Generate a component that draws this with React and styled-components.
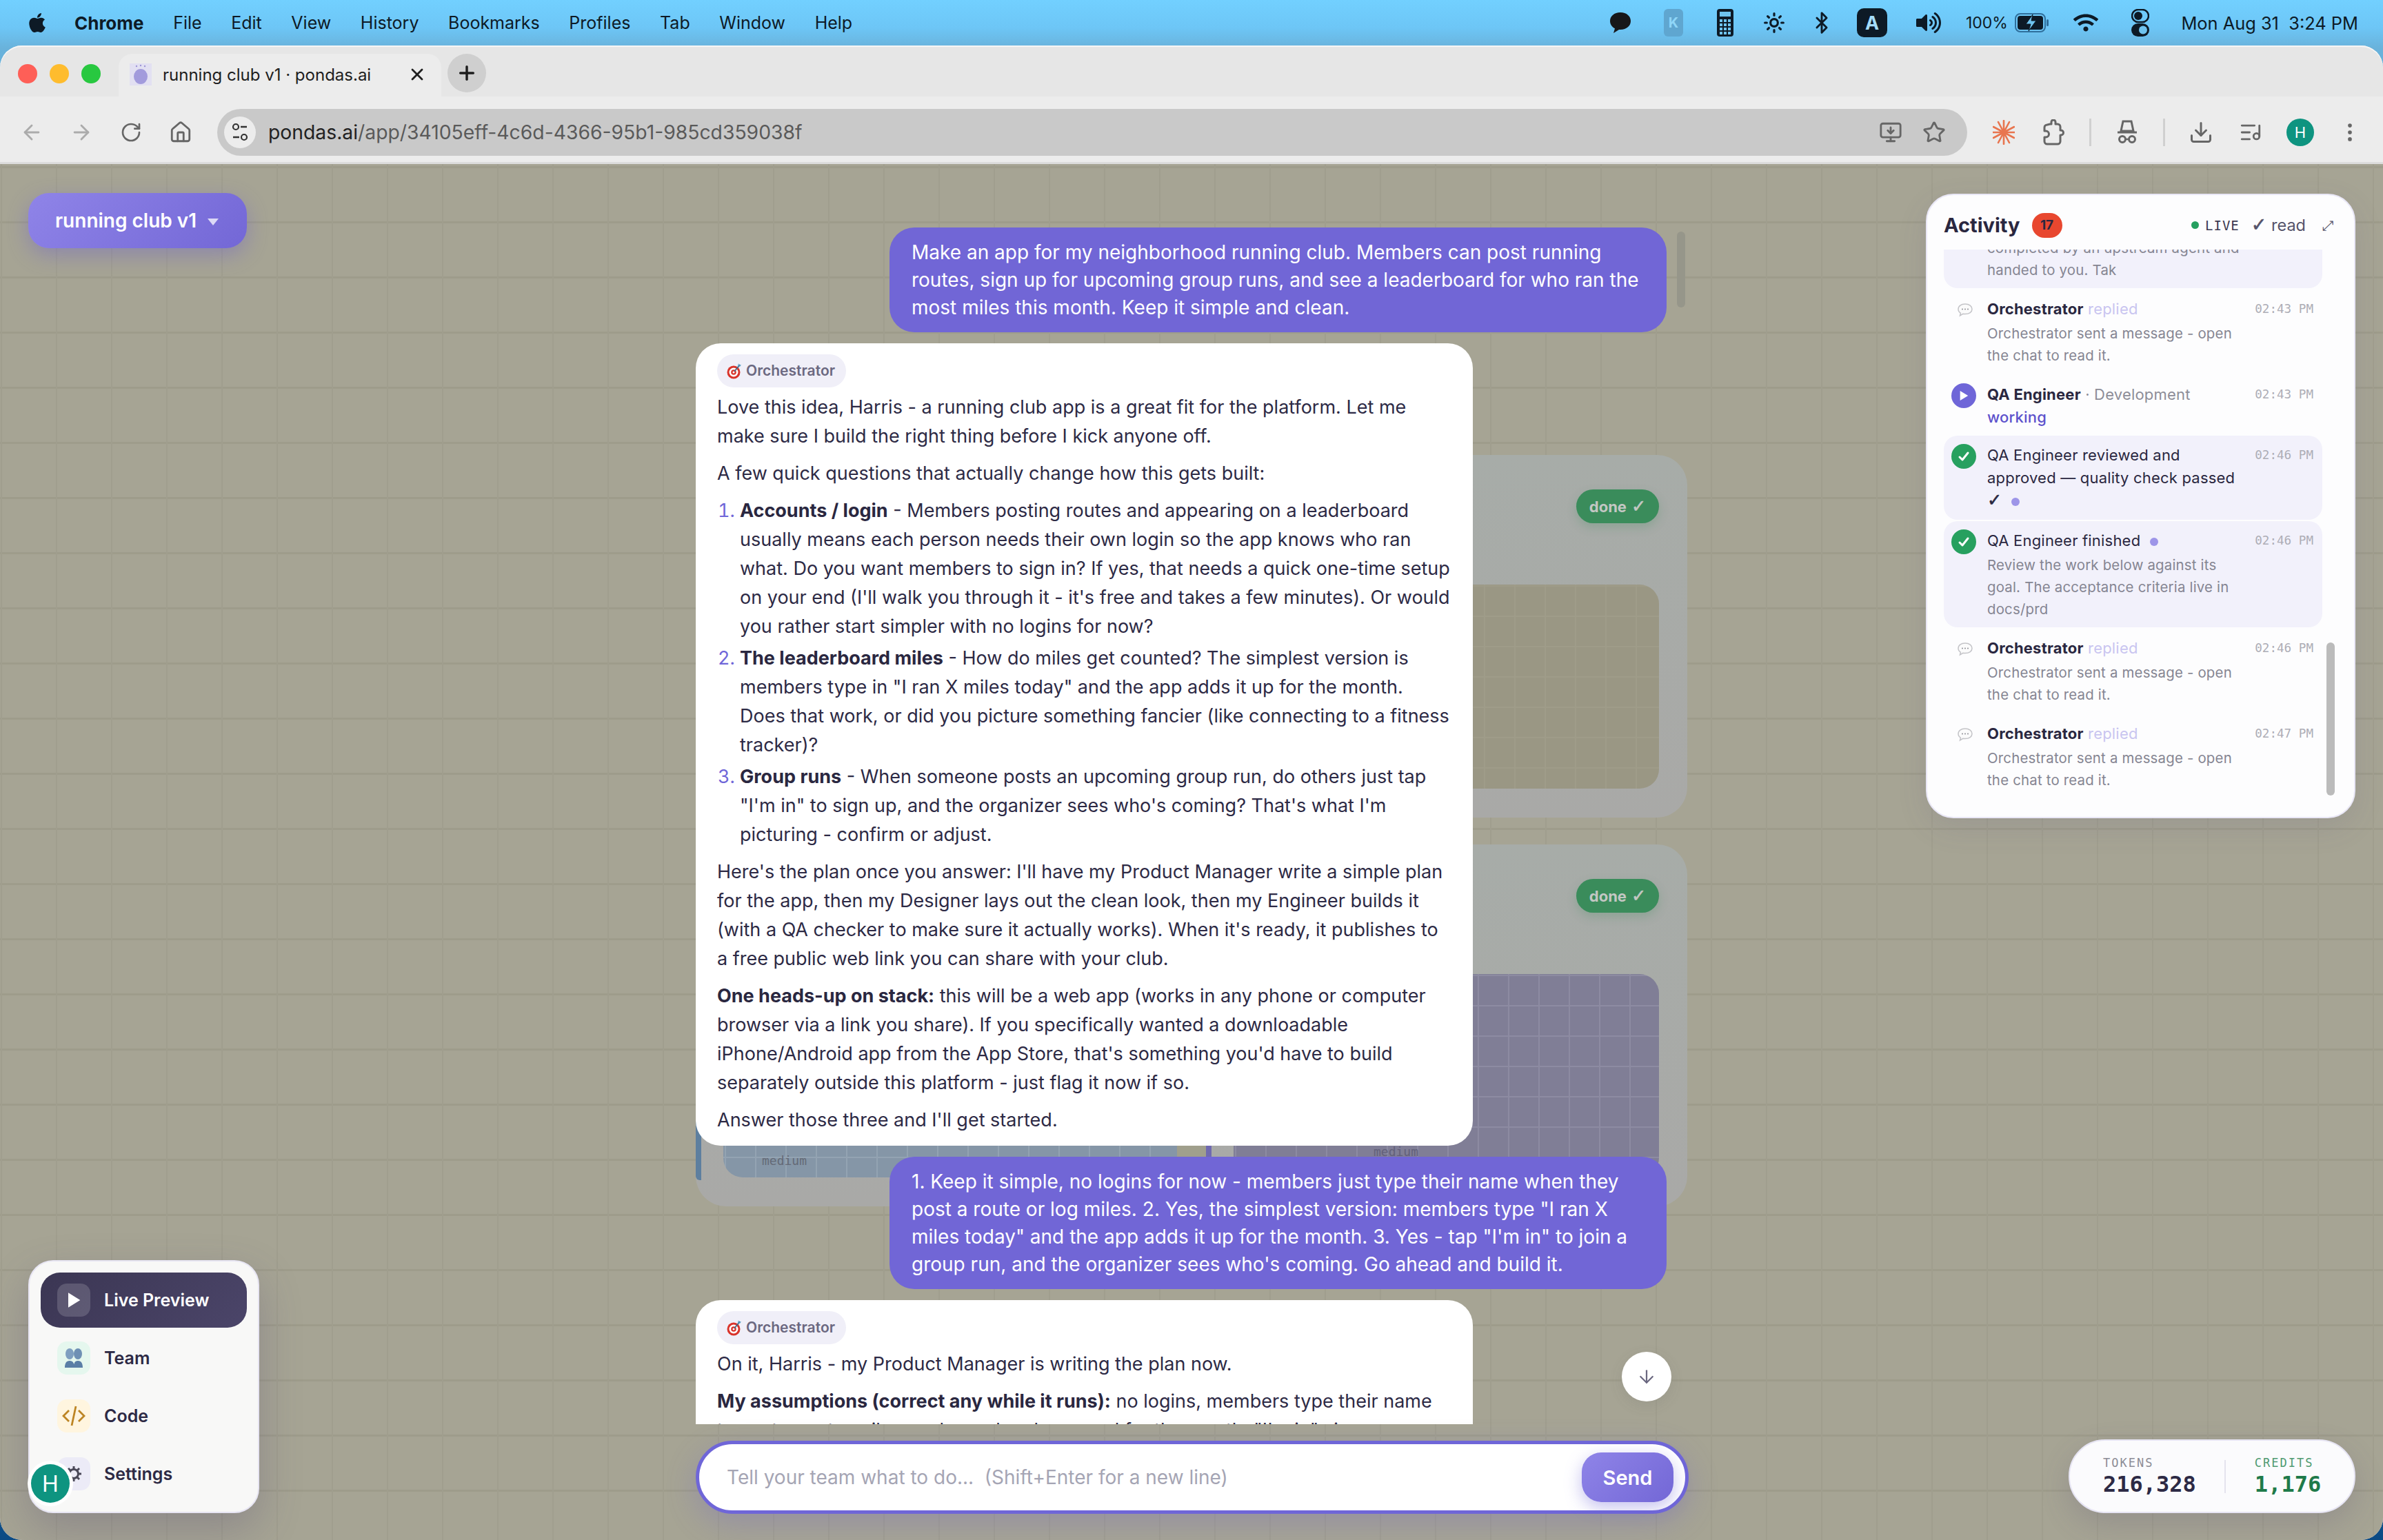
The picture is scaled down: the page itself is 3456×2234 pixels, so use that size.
import React from 'react';
import styled, { createGlobalStyle } from 'styled-components';
import { FaApple, FaWifi, FaVolumeUp } from 'react-icons/fa';
import { ArrowLeft, ArrowRight, RotateCw, Home, Star, Download, MoreVertical, ArrowDown, Sun, Bluetooth, ListMusic, MonitorDown, X, Plus } from 'lucide-react';

const GlobalStyle = createGlobalStyle`
    html, body { margin: 0; padding: 0; }
    body { font-family: Inter, "Noto Sans", sans-serif; }
    * { box-sizing: border-box; }
`;

const mono = `"DejaVu Sans Mono", "Liberation Mono", monospace`;

const Screen = styled.div`
    width: 3456px;
    height: 2234px;
    display: flex;
    flex-direction: column;
    overflow: hidden;
    background: linear-gradient(180deg, #72d0ff 0, #6dc6f6 40px, #69b2db 70px, #2c7cbc 1900px, #0b4a84 100%);
`;

// macOS menu bar
const MenuBar = styled.div`
    height: 66px;
    flex: none;
    display: flex;
    align-items: center;
    padding: 0 36px 0 38px;
    color: #0d1a26;
    font-size: 25px;
`;

const MenuItems = styled.div`
    display: flex;
    align-items: center;
    gap: 42.600px;
    margin-left: 38px;
    flex: 1;
`;

const MenuItem = styled.span`
    font-weight: ${p => (p.$bold ? 700 : 400)};
    font-size: ${p => (p.$bold ? 26 : 25)}px;
`;

const StatusSlot = styled.div`
    width: ${p => p.$w}px;
    display: flex;
    align-items: center;
    justify-content: center;
    gap: 10px;
`;

const StatusText = styled.span`
    font-size: 23px;
    white-space: nowrap;
`;

const Clock = styled.span`
    margin-left: 24px;
    font-size: 25.400px;
    white-space: nowrap;
`;

// browser window
const Browser = styled.div`
    flex: 1;
    display: flex;
    flex-direction: column;
    border-radius: 32px;
    overflow: hidden;
    background: #e6e6e6;
    box-shadow: inset 0 2px 0 #f6f6f6;
`;

const TabStrip = styled.div`
    height: 74px;
    flex: none;
    display: flex;
    align-items: flex-end;
    padding-left: 26px;
`;

const Lights = styled.div`
    display: flex;
    gap: 18px;
    align-self: center;
    margin-top: 8px;
`;

const Light = styled.span`
    width: 28px;
    height: 28px;
    border-radius: 50%;
    background: ${p => p.$c};
`;

const Tab = styled.div`
    width: 468px;
    height: 62px;
    margin-left: 26px;
    padding: 0 21px 2px 16px;
    display: flex;
    align-items: center;
    background: #ececec;
    border-radius: 20px 20px 0 0;
    font-size: 24px;
    color: #1e1e1e;
`;

const Favicon = styled.span`
    width: 32px;
    height: 32px;
    display: flex;
    align-items: center;
    justify-content: center;
    background: #e2e0f2;
    margin-right: 16px;
`;

const TabTitle = styled.span`
    flex: 1;
    white-space: nowrap;
`;

const NewTab = styled.div`
    width: 56px;
    height: 56px;
    margin: 0 0 6px 9px;
    border-radius: 50%;
    background: #cfcfcf;
    display: flex;
    align-items: center;
    justify-content: center;
    color: #1e1e1e;
`;

const Toolbar = styled.div`
    height: 98px;
    flex: none;
    display: flex;
    align-items: center;
    padding: 9px 0 0 10px;
    background: #ececec;
    border-bottom: 3px solid #dcdcdc;
`;

const ToolSlot = styled.div`
    width: ${p => p.$w || 72}px;
    flex: none;
    display: flex;
    align-items: center;
    justify-content: center;
    color: ${p => p.$c || '#666'};
`;

const UrlBar = styled.div`
    width: 2538px;
    height: 68px;
    margin: 0 17px;
    padding: 0 17px 0 10px;
    flex: none;
    display: flex;
    align-items: center;
    border-radius: 34px;
    background: #c9c9c9;
`;

const SiteIcon = styled.span`
    width: 46px;
    height: 46px;
    border-radius: 50%;
    background: #ececec;
    display: flex;
    align-items: center;
    justify-content: center;
    margin-right: 18px;
`;

const UrlText = styled.span`
    flex: 1;
    font-size: 28.300px;
    color: #5a5a5a;
    white-space: nowrap;
`;

const UrlHost = styled.span`
    color: #222;
`;

const ToolDivider = styled.span`
    width: 3px;
    height: 40px;
    margin: 0 16px;
    flex: none;
    background: #d0d0d0;
`;

const Avatar = styled.span`
    width: 40px;
    height: 40px;
    border-radius: 50%;
    background: #0e9480;
    color: #fff;
    font-size: 22px;
    display: flex;
    align-items: center;
    justify-content: center;
`;

// app canvas, panels float above it
const Canvas = styled.div`
    position: relative;
    flex: 1;
    overflow: hidden;
    background-color: #a6a494;
    background-image:
        linear-gradient(90deg, #a09e8e 2px, transparent 2px),
        linear-gradient(180deg, #9e9c8b 3px, transparent 3px);
    background-size: 80px 80px;
    background-position: 1px 3px;
`;

const ProjectPill = styled.div`
    position: absolute;
    left: 41px;
    top: 42px;
    width: 317px;
    height: 80px;
    border-radius: 30px;
    display: flex;
    align-items: center;
    gap: 16px;
    padding-left: 39px;
    color: #fff;
    font-size: 28px;
    font-weight: 600;
    white-space: nowrap;
    background: linear-gradient(135deg, #8f84e8, #7367d6);
    box-shadow: 0 10px 30px rgba(110, 100, 200, 0.45);
`;

const Caret = styled.span`
    width: 0;
    height: 0;
    margin-top: 4px;
    border-left: 8px solid transparent;
    border-right: 8px solid transparent;
    border-top: 10px solid #dcd9f6;
`;

// dimmed work cards behind the chat
const Feed = styled.div`
    position: absolute;
    left: 1009px;
    top: 422px;
    width: 1438px;
    display: flex;
    flex-direction: column;
    gap: 39px;
`;

const WorkCard = styled.div`
    height: ${p => p.$h}px;
    padding: 50px 41px 42px;
    border-radius: 44px;
    display: flex;
    flex-direction: column;
    background: linear-gradient(180deg, #a7aca8, #a9a9a7);
`;

const CardHead = styled.div`
    height: 138px;
    flex: none;
    display: flex;
    justify-content: flex-end;
    align-items: flex-start;
`;

const DoneBadge = styled.span`
    width: 120px;
    height: 49px;
    border-radius: 25px;
    display: flex;
    align-items: center;
    justify-content: center;
    gap: 7px;
    background: #3a8c5b;
    color: #c3c7c3;
    font-size: 22px;
    font-weight: 700;
    box-shadow: 0 6px 14px rgba(58, 140, 91, 0.25);
`;

const CheckGlyph = styled.span`
    font-family: "DejaVu Sans", sans-serif;
    font-size: 1.150em;
    line-height: 1;
    -webkit-text-stroke: 0.600px currentColor;
`;

const Preview = styled.div`
    position: relative;
    flex: 1;
    border-radius: 28px;
    background-color: ${p => p.$bg};
    background-image:
        linear-gradient(90deg, ${p => p.$line} 2px, transparent 2px),
        linear-gradient(180deg, ${p => p.$line} 2px, transparent 2px);
    background-size: 44px 44px;
    background-position: 2px 1px;
`;

const TileRow = styled.div`
    flex: 1;
    margin: 0 0 -4px -41px;
    display: grid;
    grid-template-columns: 698px 42px 1fr;
`;

const Tile = styled.div`
    display: flex;
    border-left: 8px solid ${p => p.$c};
    padding: 0 0 4px 32px;
    border-radius: 0 0 0 6px;
`;

const TileGap = styled.div`
    background: #a09f8c;
`;

const TileLabel = styled.span`
    position: absolute;
    left: ${p => p.$x}px;
    bottom: ${p => p.$y}px;
    font-family: ${mono};
    font-size: 18px;
    color: ${p => p.$c};
`;

const TileName = styled(TileLabel)`
    font-family: Inter, sans-serif;
    font-size: 27px;
    font-weight: 700;
    color: #2b2a42;
`;

// chat column
const Chat = styled.div`
    position: absolute;
    left: 1009px;
    top: 0;
    width: 1440px;
    height: 1828px;
    padding-top: 92px;
    overflow: hidden;
    display: flex;
    flex-direction: column;
    gap: 16px;
`;

const ChatScrollbar = styled.span`
    position: absolute;
    right: 5px;
    top: 98px;
    width: 12px;
    height: 110px;
    border-radius: 6px;
    background: #96968a;
`;

const UserBubble = styled.div`
    flex: none;
    width: 1127px;
    align-self: flex-end;
    margin-right: 32px;
    padding: 16px 32px;
    border-radius: 36px;
    background: #7166d6;
    color: #fff;
    font-size: 28px;
    line-height: 40px;
`;

const AgentBubble = styled.div`
    flex: none;
    width: 1127px;
    padding: 16px 31px;
    border-radius: 36px;
    background: #fff;
    color: #2d2a45;
    font-size: 27px;
    line-height: 42px;
`;

const AgentTag = styled.div`
    display: inline-flex;
    align-items: center;
    gap: 6px;
    height: 48px;
    padding: 0 16px 0 14px;
    margin-bottom: 8px;
    border-radius: 24px;
    background: #f0eff8;
    color: #6b6880;
    font-size: 21px;
    font-weight: 600;
    vertical-align: top;
`;

const Para = styled.p`
    margin: 0 0 12px;
    &:last-child { margin-bottom: 0; }
`;

const Steps = styled.ol`
    margin: 0 0 12px;
    padding: 0 0 0 33px;
    li { margin-bottom: 4px; }
    li:last-child { margin-bottom: 0; }
    li::marker { color: #6f66d8; }
`;

const Strong = styled.strong`
    font-weight: 700;
    color: #2a2740;
`;

const ScrollDown = styled.div`
    position: absolute;
    left: 2352px;
    top: 1723px;
    width: 72px;
    height: 72px;
    border-radius: 50%;
    background: #fff;
    display: flex;
    align-items: center;
    justify-content: center;
    color: #6b6880;
    box-shadow: 0 6px 20px rgba(80, 80, 80, 0.12);
`;

const Composer = styled.div`
    position: absolute;
    left: 1009px;
    top: 1852px;
    width: 1440px;
    height: 106px;
    padding: 0 17px 0 40px;
    display: flex;
    align-items: center;
    border-radius: 53px;
    border: 5px solid #6f66d8;
    background: #fff;
    box-shadow: 0 14px 44px rgba(110, 100, 200, 0.3);
`;

const Placeholder = styled.span`
    flex: 1;
    font-size: 28px;
    color: #a5a5b4;
    white-space: pre;
`;

const SendButton = styled.div`
    width: 133px;
    height: 72px;
    border-radius: 28px;
    display: flex;
    align-items: center;
    justify-content: center;
    color: #fff;
    font-size: 29px;
    font-weight: 600;
    background: linear-gradient(135deg, #8f84e8, #7367d6);
    box-shadow: 0 8px 24px rgba(110, 100, 214, 0.4);
`;

// activity panel
const ActivityPanel = styled.div`
    position: absolute;
    left: 2793px;
    top: 43px;
    width: 623px;
    height: 906px;
    padding: 0 24px;
    display: flex;
    flex-direction: column;
    border-radius: 40px;
    background: #fdfdfe;
    border: 2px solid #e9e7f6;
    box-shadow: 0 14px 44px rgba(80, 70, 120, 0.12);
`;

const ActivityHead = styled.div`
    height: 79px;
    flex: none;
    display: flex;
    align-items: center;
    padding-top: 8px;
`;

const ActivityTitle = styled.span`
    font-size: 29px;
    font-weight: 700;
    color: #2a2740;
`;

const CountBadge = styled.span`
    width: 44px;
    height: 36px;
    margin-left: 17px;
    border-radius: 18px;
    background: #e8472f;
    color: #2a2740;
    font-size: 19px;
    font-weight: 700;
    display: flex;
    align-items: center;
    justify-content: center;
`;

const LiveDot = styled.span`
    width: 11px;
    height: 11px;
    margin-left: auto;
    border-radius: 50%;
    background: #25a060;
`;

const LiveText = styled.span`
    margin-left: 9px;
    font-family: ${mono};
    font-size: 19px;
    letter-spacing: 1px;
    color: #3a3850;
`;

const ReadText = styled.span`
    margin-left: 17px;
    font-size: 23.500px;
    color: #55536a;
`;

const ExpandIcon = styled.span`
    margin-left: 24px;
    margin-right: 6px;
    display: flex;
    font-size: 20px;
    color: #55536a;
`;

const ActivityList = styled.div`
    flex: 1;
    min-height: 0;
    overflow: hidden;
    position: relative;
    margin-right: -20px;
`;

const ActivityItems = styled.div`
    width: 549px;
    margin-top: -33px;
    display: flex;
    flex-direction: column;
    gap: 2px;
`;

const ActivityScrollbar = styled.span`
    position: absolute;
    right: 24px;
    top: 570px;
    width: 12px;
    height: 222px;
    border-radius: 6px;
    background: #bbb;
`;

const Item = styled.div`
    display: grid;
    grid-template-columns: 63px 370px 1fr;
    padding: 12px 0 ${p => (p.$tight ? 8 : 11)}px;
    border-radius: 20px;
    background: ${p => (p.$unread ? '#f2f1fb' : 'transparent')};
`;

const ItemIcon = styled.div`
    padding: ${p => (p.$plain ? '7px' : '0')} 0 0 ${p => (p.$plain ? '19px' : '11px')};
`;

const StateDot = styled.span`
    width: 36px;
    height: 36px;
    border-radius: 50%;
    background: ${p => p.$c};
    display: flex;
    align-items: center;
    justify-content: center;
    color: #fff;
`;

const ItemTitle = styled.div`
    font-size: 22px;
    line-height: 33px;
    color: #2a2740;
    letter-spacing: 0.200px;
`;

const ItemName = styled.span`
    font-weight: 700;
`;

const ItemVerb = styled.span`
    color: ${p => p.$c};
    font-weight: ${p => p.$w || 400};
`;

const UnreadDot = styled.span`
    display: inline-block;
    width: 12px;
    height: 12px;
    margin-left: 14px;
    border-radius: 50%;
    background: #9d95e8;
`;

const ItemBody = styled.div`
    margin-top: 3px;
    font-size: 20.400px;
    line-height: 31.600px;
    color: #858592;
    letter-spacing: 0.200px;
`;

const ItemTime = styled.span`
    justify-self: end;
    padding-right: 13px;
    font-family: ${mono};
    font-size: 17.600px;
    line-height: 33px;
    color: #adadb6;
    white-space: nowrap;
`;

// left dock
const Dock = styled.div`
    position: absolute;
    left: 41px;
    top: 1590px;
    width: 335px;
    height: 367px;
    padding: 16px 16px 0;
    display: flex;
    flex-direction: column;
    gap: 4px;
    border-radius: 36px;
    background: #f8f8f7;
    border: 2px solid #e7e5f3;
    box-shadow: 0 24px 60px rgba(80, 70, 110, 0.28);
`;

const DockRow = styled.div`
    height: 80px;
    flex: none;
    padding-left: 24px;
    display: flex;
    align-items: center;
    gap: 20px;
    border-radius: 28px;
    font-size: 25px;
    font-weight: 600;
    color: ${p => (p.$active ? '#fff' : '#2d2a45')};
    background: ${p => (p.$active ? 'linear-gradient(135deg, #3b3653, #4b4569)' : 'transparent')};
`;

const DockTile = styled.span`
    width: 48px;
    height: 48px;
    border-radius: 14px;
    display: flex;
    align-items: center;
    justify-content: center;
    background: ${p => p.$bg};
`;

const UserAvatar = styled.span`
    position: absolute;
    left: 2px;
    top: 294px;
    width: 56px;
    height: 56px;
    border-radius: 50%;
    background: #0e9480;
    color: #fff;
    font-size: 32px;
    display: flex;
    align-items: center;
    justify-content: center;
    box-shadow: 0 0 0 5px #fff;
`;

// tokens / credits
const Meter = styled.div`
    position: absolute;
    left: 3000px;
    top: 1850px;
    width: 416px;
    height: 107px;
    padding: 0 0 0 48px;
    display: flex;
    align-items: center;
    border-radius: 53px;
    background: #fbfbfd;
    border: 2px solid #e6e4f3;
    box-shadow: 0 16px 44px rgba(80, 70, 110, 0.2);
`;

const MeterCell = styled.div`
    display: flex;
    flex-direction: column;
    gap: 3px;
    font-family: ${mono};
`;

const MeterLabel = styled.span`
    font-size: 17px;
    letter-spacing: 2px;
    color: ${p => p.$c};
`;

const MeterValue = styled.span`
    font-size: 32px;
    line-height: 36px;
    font-weight: 700;
    color: ${p => p.$c};
`;

const MeterDivider = styled.span`
    width: 2px;
    height: 48px;
    margin: 0 42px 0 41px;
    background: #e4e3ee;
`;

// small drawn icons
const TargetIcon = () => (
    <svg width="22" height="24" viewBox="0 0 22 24">
        <circle cx="10" cy="14" r="9.500" fill="#d9342b" />
        <circle cx="10" cy="14" r="6.500" fill="#fff" />
        <circle cx="10" cy="14" r="3.800" fill="#d9342b" />
        <circle cx="10" cy="14" r="1.500" fill="#fff" />
        <path d="M11 13L19 3" stroke="#4a6a86" strokeWidth="2" />
        <path d="M17 1l1 3 3-1-2 3-3-1z" fill="#4fa0c8" />
    </svg>
);

const ChatBubbleIcon = () => (
    <svg width="24" height="22" viewBox="0 0 24 22">
        <path d="M12 2C6 2 2 5 2 9.500c0 2.500 1.300 4.400 3.400 5.600L4.500 19l4.300-2.700c1 .2 2.100.3 3.200.3 6 0 10-3 10-7.100S18 2 12 2z" fill="#fbfbfb" stroke="#c4c4c8" strokeWidth="1.500" />
        <circle cx="8" cy="9.500" r="1" fill="#8e8e96" />
        <circle cx="12" cy="9.500" r="1" fill="#8e8e96" />
        <circle cx="16" cy="9.500" r="1" fill="#8e8e96" />
    </svg>
);

const PlayIcon = ({ size = 18, color = '#fff' }) => (
    <svg width={size} height={size} viewBox="0 0 18 18">
        <path d="M3 1l13 8-13 8z" fill={color} />
    </svg>
);

const CheckIcon = () => (
    <svg width="20" height="20" viewBox="0 0 20 20">
        <path d="M4 11l4 4 8-10" fill="none" stroke="#fff" strokeWidth="3" strokeLinecap="round" strokeLinejoin="round" />
    </svg>
);

const SpeechIcon = () => (
    <svg width="34" height="32" viewBox="0 0 34 32">
        <path d="M17 1C8 1 2 6.500 2 13.500c0 5 3 8.700 7 10.800L7 31l8-5.100h2c9 0 15-5.400 15-12.400S26 1 17 1z" fill="#17171a" />
    </svg>
);

const KeyboardK = () => (
    <svg width="30" height="42" viewBox="0 0 30 42">
        <rect x="1" y="1" width="28" height="40" rx="6" fill="#5fa6d0" />
        <text x="15" y="28" textAnchor="middle" fontFamily="Inter, sans-serif" fontSize="20" fontWeight="700" fill="#8fd6f8">K</text>
    </svg>
);

const CalcIcon = () => (
    <svg width="26" height="42" viewBox="0 0 26 42">
        <rect x="1" y="1" width="24" height="40" rx="4" fill="#0d1a26" />
        <rect x="5" y="5" width="16" height="7" fill="#6fc3ee" />
        {[16, 22, 28, 34].map(y => [5, 11, 17].map(x => <rect key={`${x}-${y}`} x={x} y={y} width="4" height="4" fill="#6fc3ee" />))}
    </svg>
);

const InputBadge = () => (
    <svg width="44" height="42" viewBox="0 0 44 42">
        <rect width="44" height="42" rx="10" fill="#0d1a26" />
        <text x="22" y="31" textAnchor="middle" fontFamily="Inter, sans-serif" fontSize="27" fontWeight="700" fill="#a4dcf8">A</text>
    </svg>
);

const BatteryIcon = () => (
    <svg width="50" height="28" viewBox="0 0 50 28">
        <rect x="1" y="1" width="43" height="26" rx="7" fill="none" stroke="#2f6f9c" strokeWidth="2" />
        <rect x="4" y="4" width="37" height="20" rx="4" fill="#0d1a26" />
        <rect x="46" y="9" width="3" height="10" rx="1.500" fill="#2f6f9c" />
        <path d="M26 2L16 16h7l-3 10 11-15h-7z" fill="#6fc3ee" stroke="#0d1a26" strokeWidth="1" />
    </svg>
);

const ControlCenter = () => (
    <svg width="26" height="40" viewBox="0 0 26 40">
        <rect x="1" y="1" width="24" height="18" rx="9" fill="none" stroke="#0d1a26" strokeWidth="2.500" />
        <circle cx="10" cy="10" r="6" fill="#0d1a26" />
        <rect y="21" width="26" height="19" rx="9.500" fill="#0d1a26" />
        <circle cx="17" cy="30.500" r="6" fill="#6fc3ee" />
    </svg>
);

const SiteTune = () => (
    <svg width="24" height="30" viewBox="0 0 24 30">
        <circle cx="6" cy="7" r="4" fill="none" stroke="#333" strokeWidth="2.200" />
        <path d="M13 7h9M2 22h9" stroke="#333" strokeWidth="2.600" />
        <circle cx="18" cy="22" r="4" fill="none" stroke="#333" strokeWidth="2.200" />
    </svg>
);

const Burst = () => (
    <svg width="32" height="36" viewBox="0 0 32 36">
        <path d="M16 1v34M8 3l16 30M24 3L8 33M1 10l30 16M31 10L1 26M0 18h32" stroke="#e8754f" strokeWidth="2.600" strokeLinecap="round" />
    </svg>
);

const ExtensionIcon = () => (
    <svg width="32" height="38" viewBox="0 0 32 38">
        <path d="M11 7h2V4a3 3 0 0 1 6 0v3h3a4 4 0 0 1 4 4v5h1a3 3 0 0 1 0 7h-1v9a4 4 0 0 1-4 4H7a4 4 0 0 1-4-4v-6h2a4 4 0 0 0 0-9H3v-5a4 4 0 0 1 4-4z" fill="none" stroke="#666" strokeWidth="3" strokeLinejoin="round" />
    </svg>
);

const SpyIcon = () => (
    <svg width="28" height="36" viewBox="0 0 28 36">
        <path d="M8 2h12l3 14H5z" fill="none" stroke="#666" strokeWidth="3" />
        <path d="M0 18h28" stroke="#666" strokeWidth="3" />
        <circle cx="7" cy="28" r="4.500" fill="none" stroke="#666" strokeWidth="3" />
        <circle cx="21" cy="28" r="4.500" fill="none" stroke="#666" strokeWidth="3" />
        <path d="M11 28h6" stroke="#666" strokeWidth="2.500" />
    </svg>
);

const FaviconBlob = () => (
    <svg width="22" height="30" viewBox="0 0 22 30">
        <ellipse cx="11" cy="18" rx="10" ry="11" fill="#a29bdc" />
        <circle cx="5" cy="3" r="1.200" fill="#9d95d8" />
        <circle cx="11" cy="2" r="1.200" fill="#9d95d8" />
        <circle cx="17" cy="3" r="1.200" fill="#9d95d8" />
    </svg>
);

const TeamIcon = () => (
    <svg width="28" height="30" viewBox="0 0 28 30">
        <ellipse cx="8" cy="9" rx="6" ry="8" fill="#7f9fc0" />
        <ellipse cx="20" cy="9" rx="6" ry="8" fill="#6f90b4" />
        <path d="M1 29c0-6 2-10 7-10s7 4 7 10zM14 29c0-6 1-10 6-10s7 4 7 10z" fill="#5a7ea6" />
    </svg>
);

const CodeIcon = () => (
    <svg width="34" height="34" viewBox="0 0 34 34">
        <path d="M10 9l-8 8 8 8M24 9l8 8-8 8M20 3l-6 28" fill="none" stroke="#bd8524" strokeWidth="2.800" />
    </svg>
);

const GearIcon = () => (
    <svg width="24" height="24" viewBox="0 0 24 24">
        <circle cx="12" cy="12" r="6.500" fill="none" stroke="#4a4858" strokeWidth="3" />
        <path d="M12 1v4M12 19v4M1 12h4M19 12h4M4 4l3 3M17 17l3 3M20 4l-3 3M7 17l-3 3" stroke="#4a4858" strokeWidth="3" />
    </svg>
);

const menus = ['File', 'Edit', 'View', 'History', 'Bookmarks', 'Profiles', 'Tab', 'Window', 'Help'];

const activity = [
    { kind: 'reply', time: '02:43 PM' },
    { kind: 'working', time: '02:43 PM' },
    { kind: 'approved', time: '02:46 PM' },
    { kind: 'finished', time: '02:46 PM' },
    { kind: 'reply', time: '02:46 PM' },
    { kind: 'reply', time: '02:47 PM' },
];

const ReplyBody = () => <ItemBody>Orchestrator sent a message - open the chat to read it.</ItemBody>;

const ActivityRow = ({ kind, time }) => {
    if (kind === 'working') {
        return (
            <Item $tight>
                <ItemIcon><StateDot $c="#6f66d8"><PlayIcon size={16} /></StateDot></ItemIcon>
                <div>
                    <ItemTitle><ItemName>QA Engineer</ItemName> <ItemVerb $c="#8d8d98">· Development</ItemVerb></ItemTitle>
                    <ItemTitle><ItemVerb $c="#5d52cc" $w={500}>working</ItemVerb></ItemTitle>
                </div>
                <ItemTime>{time}</ItemTime>
            </Item>
        );
    }
    if (kind === 'approved') {
        return (
            <Item $unread>
                <ItemIcon><StateDot $c="#27a05f"><CheckIcon /></StateDot></ItemIcon>
                <ItemTitle>QA Engineer reviewed and approved — quality check passed <CheckGlyph>✓</CheckGlyph><UnreadDot /></ItemTitle>
                <ItemTime>{time}</ItemTime>
            </Item>
        );
    }
    if (kind === 'finished') {
        return (
            <Item $unread>
                <ItemIcon><StateDot $c="#27a05f"><CheckIcon /></StateDot></ItemIcon>
                <div>
                    <ItemTitle>QA Engineer finished<UnreadDot /></ItemTitle>
                    <ItemBody>Review the work below against its goal. The acceptance criteria live in docs/prd</ItemBody>
                </div>
                <ItemTime>{time}</ItemTime>
            </Item>
        );
    }
    return (
        <Item>
            <ItemIcon $plain><ChatBubbleIcon /></ItemIcon>
            <div>
                <ItemTitle><ItemName>Orchestrator</ItemName> <ItemVerb $c="#c9c5f0">replied</ItemVerb></ItemTitle>
                <ReplyBody />
            </div>
            <ItemTime>{time}</ItemTime>
        </Item>
    );
};

const App = () => (
    <Screen>
        <GlobalStyle />
        <MenuBar>
            <FaApple size={32} />
            <MenuItems>
                <MenuItem $bold>Chrome</MenuItem>
                {menus.map(m => <MenuItem key={m}>{m}</MenuItem>)}
            </MenuItems>
            <StatusSlot $w={78}><SpeechIcon /></StatusSlot>
            <StatusSlot $w={76}><KeyboardK /></StatusSlot>
            <StatusSlot $w={74}><CalcIcon /></StatusSlot>
            <StatusSlot $w={67}><Sun size={32} strokeWidth={2.4} /></StatusSlot>
            <StatusSlot $w={71}><Bluetooth size={34} strokeWidth={2} /></StatusSlot>
            <StatusSlot $w={76}><InputBadge /></StatusSlot>
            <StatusSlot $w={88}><FaVolumeUp size={36} /></StatusSlot>
            <StatusSlot $w={140}><StatusText>100%</StatusText><BatteryIcon /></StatusSlot>
            <StatusSlot $w={88}><FaWifi size={36} /></StatusSlot>
            <StatusSlot $w={70}><ControlCenter /></StatusSlot>
            <Clock>Mon Aug 31&nbsp;&nbsp;3:24 PM</Clock>
        </MenuBar>
        <Browser>
            <TabStrip>
                <Lights>
                    <Light $c="#fe5f57" />
                    <Light $c="#febc2e" />
                    <Light $c="#28c840" />
                </Lights>
                <Tab>
                    <Favicon><FaviconBlob /></Favicon>
                    <TabTitle>running club v1 · pondas.ai</TabTitle>
                    <X size={28} strokeWidth={2.4} />
                </Tab>
                <NewTab><Plus size={32} strokeWidth={2.6} /></NewTab>
            </TabStrip>
            <Toolbar>
                <ToolSlot $c="#ababab"><ArrowLeft size={34} /></ToolSlot>
                <ToolSlot $c="#ababab"><ArrowRight size={34} /></ToolSlot>
                <ToolSlot><RotateCw size={32} /></ToolSlot>
                <ToolSlot><Home size={34} /></ToolSlot>
                <UrlBar>
                    <SiteIcon><SiteTune /></SiteIcon>
                    <UrlText><UrlHost>pondas.ai</UrlHost>/app/34105eff-4c6d-4366-95b1-985cd359038f</UrlText>
                    <ToolSlot $w={63}><MonitorDown size={34} /></ToolSlot>
                    <ToolSlot $w={63}><Star size={34} /></ToolSlot>
                </UrlBar>
                <ToolSlot><Burst /></ToolSlot>
                <ToolSlot><ExtensionIcon /></ToolSlot>
                <ToolDivider />
                <ToolSlot><SpyIcon /></ToolSlot>
                <ToolDivider />
                <ToolSlot><Download size={36} /></ToolSlot>
                <ToolSlot><ListMusic size={34} /></ToolSlot>
                <ToolSlot><Avatar>H</Avatar></ToolSlot>
                <ToolSlot><MoreVertical size={34} /></ToolSlot>
            </Toolbar>
            <Canvas>
                <ProjectPill>running club v1<Caret /></ProjectPill>

                <Feed>
                    <WorkCard $h={526}>
                        <CardHead><DoneBadge>done <CheckGlyph>✓</CheckGlyph></DoneBadge></CardHead>
                        <Preview $bg="#9a9784" $line="#9f9c89" />
                    </WorkCard>
                    <WorkCard $h={525}>
                        <CardHead><DoneBadge>done <CheckGlyph>✓</CheckGlyph></DoneBadge></CardHead>
                        <TileRow>
                            <Tile $c="#5d7f9f">
                                <Preview $bg="#8596a7" $line="#93a3b2">
                                    <TileName $x={56} $y={50}>Design</TileName>
                                    <TileLabel $x={56} $y={14} $c="#646a76">medium</TileLabel>
                                </Preview>
                            </Tile>
                            <TileGap />
                            <Tile $c="#6f69b0">
                                <Preview $bg="#807e96" $line="#8d8ba2">
                                    <TileName $x={20} $y={60}>Design</TileName>
                                    <TileLabel $x={203} $y={27} $c="#63617a">medium</TileLabel>
                                </Preview>
                            </Tile>
                        </TileRow>
                    </WorkCard>
                </Feed>

                <Chat>
                    <ChatScrollbar />
                    <UserBubble>Make an app for my neighborhood running club. Members can post running routes, sign up for upcoming group runs, and see a leaderboard for who ran the most miles this month. Keep it simple and clean.</UserBubble>
                    <AgentBubble>
                        <AgentTag><TargetIcon />Orchestrator</AgentTag>
                        <Para>Love this idea, Harris - a running club app is a great fit for the platform. Let me make sure I build the right thing before I kick anyone off.</Para>
                        <Para>A few quick questions that actually change how this gets built:</Para>
                        <Steps>
                            <li><Strong>Accounts / login</Strong> - Members posting routes and appearing on a leaderboard usually means each person needs their own login so the app knows who ran what. Do you want members to sign in? If yes, that needs a quick one-time setup on your end (I'll walk you through it - it's free and takes a few minutes). Or would you rather start simpler with no logins for now?</li>
                            <li><Strong>The leaderboard miles</Strong> - How do miles get counted? The simplest version is members type in "I ran X miles today" and the app adds it up for the month. Does that work, or did you picture something fancier (like connecting to a fitness tracker)?</li>
                            <li><Strong>Group runs</Strong> - When someone posts an upcoming group run, do others just tap "I'm in" to sign up, and the organizer sees who's coming? That's what I'm picturing - confirm or adjust.</li>
                        </Steps>
                        <Para>Here's the plan once you answer: I'll have my Product Manager write a simple plan for the app, then my Designer lays out the clean look, then my Engineer builds it (with a QA checker to make sure it actually works). When it's ready, it publishes to a free public web link you can share with your club.</Para>
                        <Para><Strong>One heads-up on stack:</Strong> this will be a web app (works in any phone or computer browser via a link you share). If you specifically wanted a downloadable iPhone/Android app from the App Store, that's something you'd have to build separately outside this platform - just flag it now if so.</Para>
                        <Para>Answer those three and I'll get started.</Para>
                    </AgentBubble>
                    <UserBubble>1. Keep it simple, no logins for now - members just type their name when they post a route or log miles. 2. Yes, the simplest version: members type "I ran X miles today" and the app adds it up for the month. 3. Yes - tap "I'm in" to join a group run, and the organizer sees who's coming. Go ahead and build it.</UserBubble>
                    <AgentBubble>
                        <AgentTag><TargetIcon />Orchestrator</AgentTag>
                        <Para>On it, Harris - my Product Manager is writing the plan now.</Para>
                        <Para><Strong>My assumptions (correct any while it runs):</Strong> no logins, members type their name to post a route, miles are logged and summed for the month, "I'm in" signs you up for a group run.</Para>
                    </AgentBubble>
                </Chat>

                <ScrollDown><ArrowDown size={30} strokeWidth={1.8} /></ScrollDown>

                <Composer>
                    <Placeholder>Tell your team what to do...  (Shift+Enter for a new line)</Placeholder>
                    <SendButton>Send</SendButton>
                </Composer>

                <ActivityPanel>
                    <ActivityHead>
                        <ActivityTitle>Activity</ActivityTitle>
                        <CountBadge>17</CountBadge>
                        <LiveDot />
                        <LiveText>LIVE</LiveText>
                        <ReadText><CheckGlyph>✓</CheckGlyph> read</ReadText>
                        <ExpandIcon>⤢</ExpandIcon>
                    </ActivityHead>
                    <ActivityList>
                        <ActivityScrollbar />
                        <ActivityItems>
                            <Item $unread>
                                <span />
                                <ItemBody>completed by an upstream agent and handed to you. Tak</ItemBody>
                                <span />
                            </Item>
                            {activity.map((a, i) => <ActivityRow key={i} {...a} />)}
                        </ActivityItems>
                    </ActivityList>
                </ActivityPanel>

                <Dock>
                    <DockRow $active>
                        <DockTile $bg="rgba(255,255,255,0.16)"><PlayIcon size={24} /></DockTile>
                        Live Preview
                    </DockRow>
                    <DockRow><DockTile $bg="#e5f7ee"><TeamIcon /></DockTile>Team</DockRow>
                    <DockRow><DockTile $bg="#fff5df"><CodeIcon /></DockTile>Code</DockRow>
                    <DockRow><DockTile $bg="#ecebf7"><GearIcon /></DockTile>Settings</DockRow>
                    <UserAvatar>H</UserAvatar>
                </Dock>

                <Meter>
                    <MeterCell>
                        <MeterLabel $c="#8c8c96">TOKENS</MeterLabel>
                        <MeterValue $c="#2d2a45">216,328</MeterValue>
                    </MeterCell>
                    <MeterDivider />
                    <MeterCell>
                        <MeterLabel $c="#4f9a70">CREDITS</MeterLabel>
                        <MeterValue $c="#1f7a4a">1,176</MeterValue>
                    </MeterCell>
                </Meter>
            </Canvas>
        </Browser>
    </Screen>
);

export default App;
